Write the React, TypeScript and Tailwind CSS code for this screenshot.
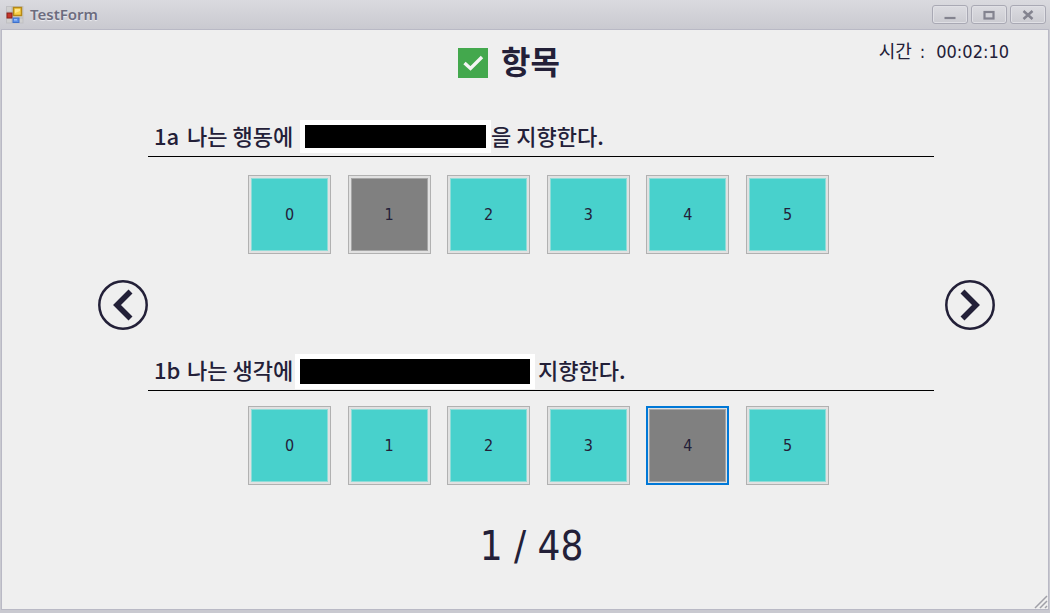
import React, { useState } from "react";

const scores = [0, 1, 2, 3, 4, 5];

function FormIcon() {
  return (
    <svg viewBox="0 0 18 18" className="size-[18px]" aria-hidden="true">
      <rect x="0.5" y="0.5" width="16.500" height="16.500" fill="#d0d0d0" stroke="#c0c0c3" />
      <path d="M6 1v16M1 6h6M1 12h16" stroke="#b8b8bc" fill="none" />
      <rect x="7.500" y="1.500" width="8" height="8" fill="#f9d047" stroke="#b58817" strokeWidth="1.500" />
      <path d="M9 3h5v2l-5 2z" fill="#ffe68a" />
      <rect x="1" y="7" width="5" height="5" fill="#c5352b" stroke="#8c2019" />
      <rect x="7" y="12" width="6" height="4.500" fill="#5e92e8" stroke="#3e70cb" />
      <path d="M8 13h3v1.500H8z" fill="#9cc0fa" />
    </svg>
  );
}

function CaptionButton({ label, children }: { label: string; children: React.ReactNode }) {
  return (
    <button
      type="button"
      aria-label={label}
      className="flex h-[19px] w-9 items-center justify-center rounded-[3px] border border-[#a9a9b4] bg-linear-to-b from-[#dcdce1] to-[#cbcbd1] text-[#83838f] shadow-[inset_0_0_0_1px_#e0e0e5]"
    >
      <svg viewBox="0 0 12 10" className="h-[10px] w-3" fill="none" stroke="currentColor" aria-hidden="true">
        {children}
      </svg>
    </button>
  );
}

function NavButton({ label, d }: { label: string; d: string }) {
  return (
    <button type="button" aria-label={label} className="size-[50px] shrink-0">
      <svg viewBox="0 0 50 50" className="size-full" fill="none" stroke="#232038" aria-hidden="true">
        <circle cx="25" cy="25" r="23.700" strokeWidth="2.500" />
        <path d={d} strokeWidth="5.600" />
      </svg>
    </button>
  );
}

function Scale({ name, value, focused, onPick }: { name: string; value: number; focused: boolean; onPick: (n: number) => void }) {
  return (
    <div role="group" aria-label={name} className="flex justify-between pr-[105px] pl-[100px]">
      {scores.map((n) => (
        <button
          key={n}
          type="button"
          aria-pressed={n === value}
          onClick={() => onPick(n)}
          className={`flex h-[79px] w-[83px] bg-[#e1e1e1] ${
            focused && n === value ? "border-2 border-[#0078d7] p-px" : "border border-[#b1b1b1] p-[2px]"
          }`}
        >
          <span
            className={`flex flex-1 items-center justify-center self-stretch border text-base ${
              n === value ? "border-[#a6a6a6] bg-[#808080]" : "border-[#8fdcd8] bg-[#48d1cc]"
            }`}
          >
            {n}
          </span>
        </button>
      ))}
    </div>
  );
}

export default function App() {
  const [first, setFirst] = useState(1);
  const [second, setSecond] = useState(4);
  const [active, setActive] = useState("1b");

  return (
    <div className="flex min-h-screen flex-col bg-linear-to-b from-[#dadadf] from-0% to-[#c9c9d0] to-[30px] px-px pb-[3px] font-['DejaVu_Sans_Condensed','Noto_Sans_CJK_KR',sans-serif] text-[#232038]">
      <header className="flex h-[29px] items-center justify-between pr-[3px] pl-[5px]">
        <div className="flex items-center gap-[6px]">
          <FormIcon />
          <h1 className="font-['Noto_Sans',sans-serif] text-[15px] font-semibold text-[#6c6c7e] [text-shadow:0_1px_1px_#eeeef2]">TestForm</h1>
        </div>
        <div className="flex gap-[3px]">
          <CaptionButton label="Minimize">
            <path d="M0.500 8h11" strokeWidth="2.200" />
          </CaptionButton>
          <CaptionButton label="Maximize">
            <rect x="1.500" y="2" width="9" height="6.500" strokeWidth="2.200" />
          </CaptionButton>
          <CaptionButton label="Close">
            <path d="M1.500 1l9 8M10.500 1l-9 8" strokeWidth="2.500" />
          </CaptionButton>
        </div>
      </header>

      <main className="relative flex flex-1 flex-col border border-[#b9b9c5] bg-[#efefef]">
        <div className="grid h-[90px] grid-cols-[1fr_auto_1fr] items-start pr-[39px] pl-[7px]">
          <h2 className="col-start-2 flex items-center gap-[13px] pt-[9px] text-[32px] leading-[48px] font-bold">
            <svg viewBox="0 0 30 30" className="size-[30px]" aria-hidden="true">
              <rect width="30" height="30" fill="#43a84d" />
              <path d="M6.500 15l6 5.500L24 9" fill="none" stroke="#f4f4f4" strokeWidth="3.400" />
            </svg>
            항목
          </h2>
          <p className="flex justify-end pt-[10px] text-lg leading-6">
            <span className="pr-2">시간</span>
            <span className="pr-[11px]">:</span>
            <time>00:02:10</time>
          </p>
        </div>

        <div className="flex items-center pr-[53px] pl-[96px]">
          <NavButton label="Previous" d="M32.500 11.500L19 25L32.500 38.500" />
          <div className="min-w-0 flex-1 pb-1">
            <section>
              <div className="flex h-[37px] items-start border-b border-black font-['Noto_Sans_CJK_KR',sans-serif] text-[22px] leading-[30px] font-medium whitespace-nowrap">
                <span className="w-[39px] shrink-0 pl-[6px]">1a</span>
                <span className="w-[113px] shrink-0">나는 행동에</span>
                <span className="h-[33px] w-[191px] shrink-0 border-5 border-white bg-black" />
                <span>을 지향한다.</span>
              </div>
              <div className="pt-[18px]">
                <Scale name="1a" value={first} focused={active === "1a"} onPick={(n) => { setFirst(n); setActive("1a"); }} />
              </div>
            </section>
            <section className="pt-[100px]">
              <div className="flex h-[37px] items-start border-b border-black font-['Noto_Sans_CJK_KR',sans-serif] text-[22px] leading-[30px] font-medium whitespace-nowrap">
                <span className="w-[39px] shrink-0 pl-[6px]">1b</span>
                <span className="w-[108px] shrink-0">나는 생각에</span>
                <span className="h-[35px] w-[240px] shrink-0 border-5 border-white bg-black" />
                <span className="pl-[3px]">지향한다.</span>
              </div>
              <div className="pt-[15px]">
                <Scale name="1b" value={second} focused={active === "1b"} onPick={(n) => { setSecond(n); setActive("1b"); }} />
              </div>
            </section>
          </div>
          <div className="flex pl-[11px]">
            <NavButton label="Next" d="M17.500 11.500L31 25L17.500 38.500" />
          </div>
        </div>

        <p className="pt-[33px] pl-[13px] text-center text-[40px] leading-[48px]">1 / 48</p>
        <svg viewBox="0 0 14 14" className="absolute right-0 bottom-0 size-[14px]" fill="none" aria-hidden="true">
          <path d="M1 13L13 1M6 13l7-7M11 13l2-2" stroke="#a0a0a8" strokeWidth="1.500" />
        </svg>
      </main>
    </div>
  );
}
